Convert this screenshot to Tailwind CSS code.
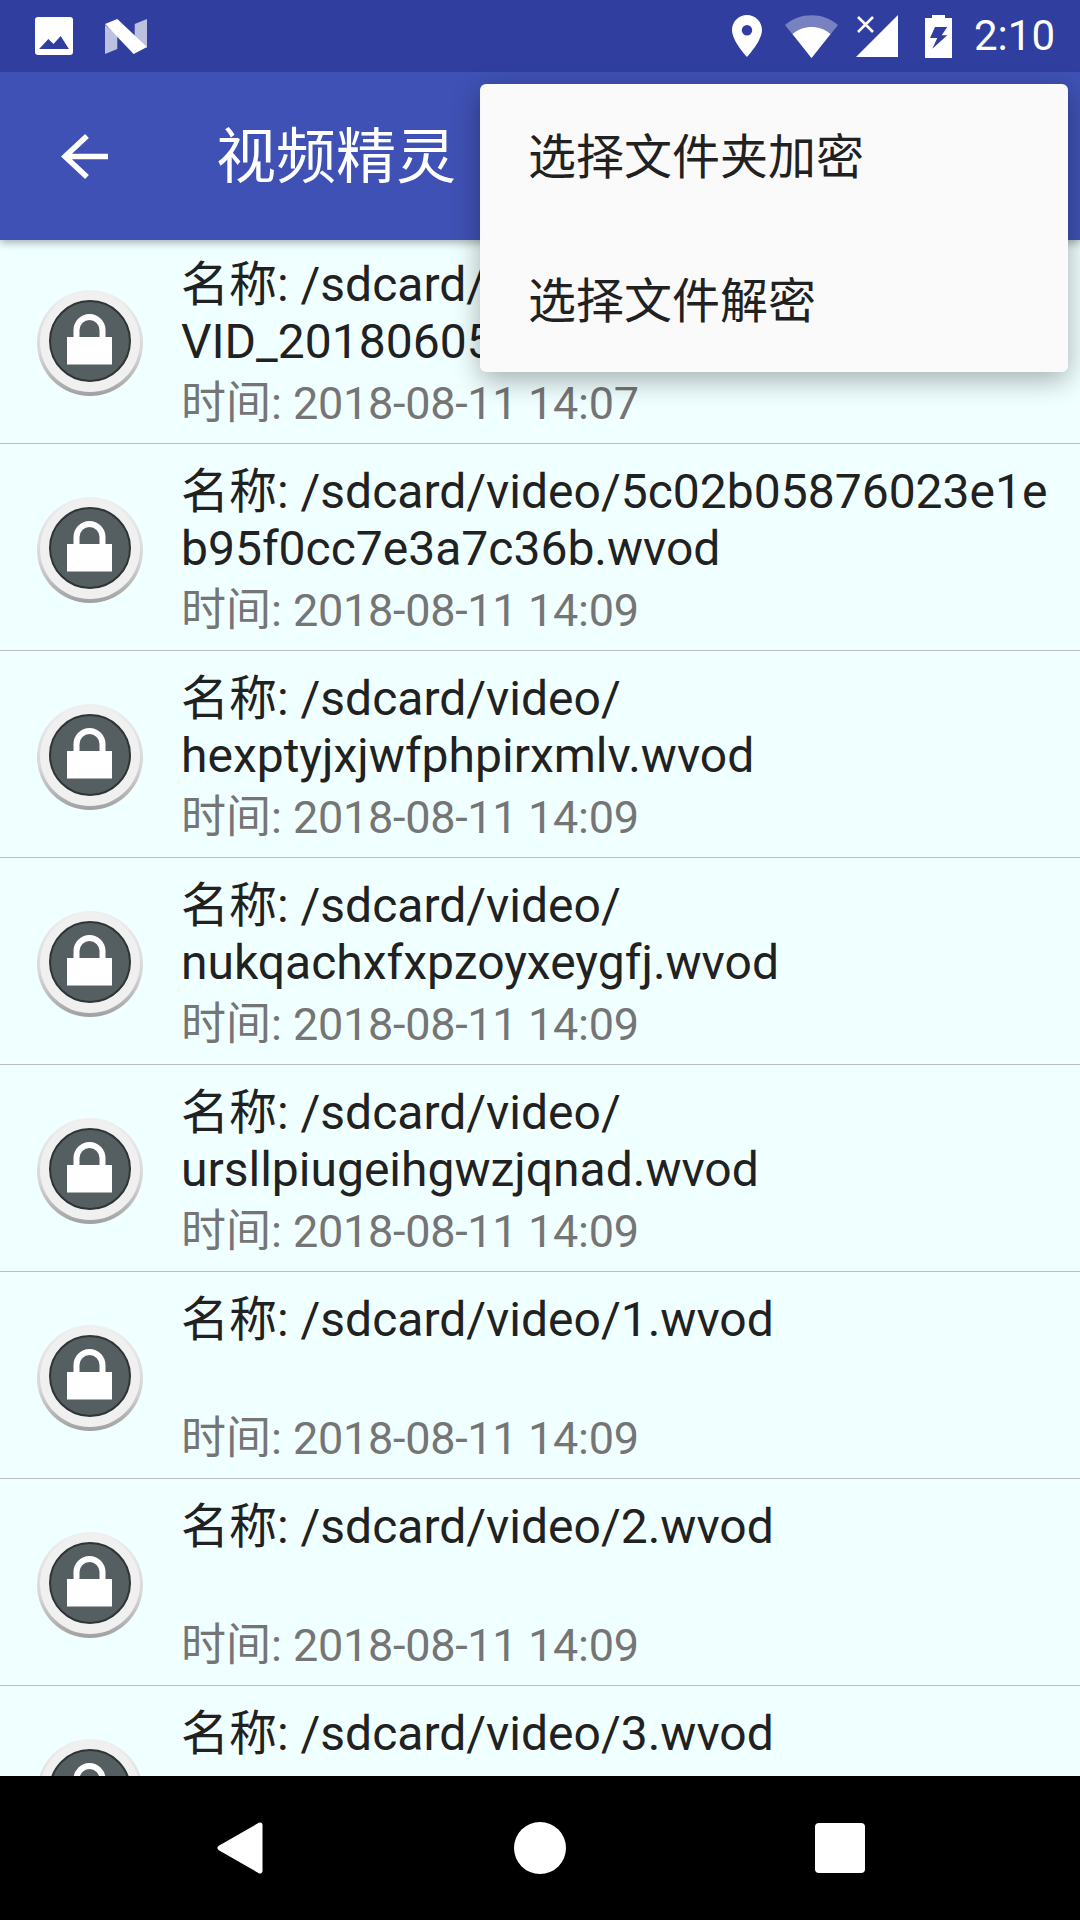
<!DOCTYPE html>
<html lang="zh">
<head>
  <meta charset="UTF-8" />
  <meta name="viewport" content="width=device-width, initial-scale=1.0"/>
  <title>视频精灵</title>
  <script src="https://cdn.jsdelivr.net/npm/@tailwindcss/browser@4"></script>
</head>
<body class="bg-black">
  <div class="relative w-[1080px] h-[1920px] overflow-hidden flex flex-col font-[Roboto,'Noto_Sans_CJK_SC',sans-serif]">

    <!-- Status bar -->
    <div class="relative z-20 h-[72px] shrink-0 bg-[#303f9f] flex items-center text-white">
      <svg class="ml-[35px] w-[38px] h-[38px]" viewBox="0 0 37 38" preserveAspectRatio="none">
        <rect width="37" height="38" rx="3" fill="#fff"/>
        <path d="M4 32 L13 22 L18 27 L25 19 L33 32 Z" fill="#303f9f"/>
      </svg>
      <svg class="ml-[32px] w-[42px] h-[35px]" viewBox="0 0 41 35" preserveAspectRatio="none">
        <path d="M0 6 L12 17 L12 30 L0 35 Z" fill="#fff" fill-opacity=".68"/>
        <path d="M41 0 L41 29 L29 17 L29 5 Z" fill="#fff" fill-opacity=".68"/>
        <path d="M0 5 L12 0 L41 28 L28 35 Z" fill="#fff"/>
      </svg>
      <div class="flex-1"></div>
      <svg class="w-[30px] h-[42px]" viewBox="0 0 30 42">
        <path fill-rule="evenodd" d="M15 0 C6.7 0 0 6.7 0 15 C0 26 15 42 15 42 C15 42 30 26 30 15 C30 6.7 23.3 0 15 0 Z M15 10 A5.2 5.2 0 1 1 15 20.4 A5.2 5.2 0 1 1 15 10 Z" fill="#fff"/>
      </svg>
      <svg class="ml-[23px] w-[53px] h-[43px]" viewBox="0 0 53 43">
        <path d="M0 10 C15 -3 38 -3 53 10 L26.500 43 Z" fill="#fff" fill-opacity=".35"/>
        <path d="M7.500 19 C18 9.500 35 9.500 45.500 19 L26.500 43 Z" fill="#fff"/>
      </svg>
      <svg class="ml-[18px] w-[42px] h-[42px]" viewBox="0 0 42 42">
        <path d="M42 0 L42 42 L0 42 Z" fill="#fff"/>
        <path d="M2 2 L17 17 M17 2 L2 17" stroke="#fff" stroke-width="2.600" fill="none"/>
      </svg>
      <svg class="ml-[27px] w-[27px] h-[43px]" viewBox="0 0 27 43">
        <path fill-rule="evenodd" d="M7 0 H20 V3 H27 V43 H0 V3 H7 Z M10 12 L22.300 12 L16.700 20.300 L22.300 20.300 L7.300 33.700 L12.300 23 L5 23 Z" fill="#fff"/>
      </svg>
      <span class="ml-[22px] mr-[25px] text-[42px] leading-none">2:10</span>
    </div>

    <!-- Toolbar -->
    <div class="relative z-10 h-[168px] shrink-0 bg-[#3f51b5] flex items-center shadow-[0_3px_8px_rgba(0,0,0,0.3)] text-white">
      <svg class="ml-[60px] w-[48px] h-[47px]" viewBox="0 0 48 47">
        <path d="M48 23.500 H6 M27 3 L5 23.500 L27 44" stroke="#fff" stroke-width="5.500" fill="none"/>
      </svg>
      <span class="ml-[108px] pt-[3px] text-[60px] leading-none">视频精灵</span>
    </div>

    <!-- List, scrolled a few px up -->
    <div class="flex-1 min-h-0 overflow-hidden bg-[#f0ffff]">
      <ul id="fileList" class="-mt-[3px]"></ul>
    </div>

    <!-- Navigation bar -->
    <div class="relative z-10 h-[144px] shrink-0 bg-black flex items-center">
      <svg class="ml-[217px] w-[46px] h-[52px]" viewBox="0 0 46 52">
        <path d="M43 3 L3 26 L43 49 Z" fill="#fff" stroke="#fff" stroke-width="5" stroke-linejoin="round"/>
      </svg>
      <div class="ml-[251px] w-[52px] h-[52px] rounded-full bg-white"></div>
      <div class="ml-[249px] w-[50px] h-[50px] rounded-[4px] bg-white"></div>
    </div>

    <!-- Overflow menu -->
    <div class="absolute z-30 left-[480px] top-[84px] w-[588px] h-[288px] bg-[#fafafa] rounded-[6px] shadow-[0_8px_28px_rgba(0,0,0,0.32)] text-[#212121] text-[48px]">
      <div class="h-[144px] pl-[48px] pt-[3px] flex items-center">选择文件夹加密</div>
      <div class="h-[144px] pl-[48px] pt-[3px] flex items-center">选择文件解密</div>
    </div>
  </div>

  <script>
    const files = [
      ["/sdcard/DCIM/Camera/", "VID_20180605_120000.mp4", "14:07"],
      ["/sdcard/video/5c02b05876023e1e", "b95f0cc7e3a7c36b.wvod", "14:09"],
      ["/sdcard/video/", "hexptyjxjwfphpirxmlv.wvod", "14:09"],
      ["/sdcard/video/", "nukqachxfxpzoyxeygfj.wvod", "14:09"],
      ["/sdcard/video/", "ursllpiugeihgwzjqnad.wvod", "14:09"],
      ["/sdcard/video/1.wvod", "", "14:09"],
      ["/sdcard/video/2.wvod", "", "14:09"],
      ["/sdcard/video/3.wvod", "", "14:09"],
    ];

    function lockIcon() {
      return `
        <svg class="ml-[37px] mt-[53px] w-[106px] h-[106px] shrink-0" viewBox="0 0 106 106">
          <defs>
            <linearGradient id="ring" x1="0" y1="0" x2="0" y2="1">
              <stop offset="0" stop-color="#f0f0f0"/>
              <stop offset="0.6" stop-color="#d6d6d6"/>
              <stop offset="1" stop-color="#a0a0a0"/>
            </linearGradient>
          </defs>
          <circle cx="53" cy="53" r="53" fill="url(#ring)"/>
          <circle cx="53" cy="52" r="50" fill="#f0f0f0"/>
          <circle cx="53" cy="51" r="40" fill="#555f61" stroke="#2f3435" stroke-width="2"/>
          <path d="M39.500 48 V40 A13 13 0 0 1 65.500 40 V48" fill="none" stroke="#fff" stroke-width="6"/>
          <rect x="30" y="47" width="45" height="27.500" fill="#fff"/>
        </svg>`;
    }

    function renderList() {
      const list = document.getElementById("fileList");
      files.forEach(([line1, line2, time]) => {
        const li = document.createElement("li");
        li.className = "flex h-[207px] border-b border-[#bdbdbd]";
        li.innerHTML = `
          ${lockIcon()}
          <div class="ml-[38px] pt-[19px] whitespace-nowrap">
            <div class="h-[57px] text-[48px] leading-[57px] text-[#212121]">名称: ${line1}</div>
            <div class="h-[57px] text-[48px] leading-[57px] text-[#212121]">${line2}</div>
            <div class="mt-[5px] h-[57px] text-[45px] leading-[57px] text-[#757575]">时间: <span class="tracking-[-0.3px]">2018-08-11 ${time}</span></div>
          </div>
        `;
        list.appendChild(li);
      });
    }

    renderList();
  </script>
</body>
</html>
